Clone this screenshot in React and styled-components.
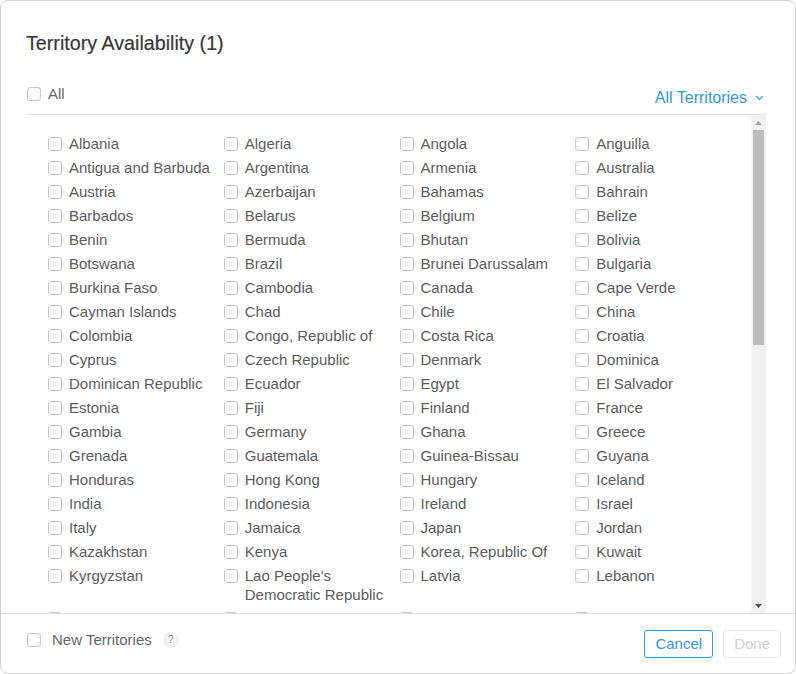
import styled, { createGlobalStyle } from 'styled-components'

const territories = [
  'Albania', 'Algeria', 'Angola', 'Anguilla',
  'Antigua and Barbuda', 'Argentina', 'Armenia', 'Australia',
  'Austria', 'Azerbaijan', 'Bahamas', 'Bahrain',
  'Barbados', 'Belarus', 'Belgium', 'Belize',
  'Benin', 'Bermuda', 'Bhutan', 'Bolivia',
  'Botswana', 'Brazil', 'Brunei Darussalam', 'Bulgaria',
  'Burkina Faso', 'Cambodia', 'Canada', 'Cape Verde',
  'Cayman Islands', 'Chad', 'Chile', 'China',
  'Colombia', 'Congo, Republic of', 'Costa Rica', 'Croatia',
  'Cyprus', 'Czech Republic', 'Denmark', 'Dominica',
  'Dominican Republic', 'Ecuador', 'Egypt', 'El Salvador',
  'Estonia', 'Fiji', 'Finland', 'France',
  'Gambia', 'Germany', 'Ghana', 'Greece',
  'Grenada', 'Guatemala', 'Guinea-Bissau', 'Guyana',
  'Honduras', 'Hong Kong', 'Hungary', 'Iceland',
  'India', 'Indonesia', 'Ireland', 'Israel',
  'Italy', 'Jamaica', 'Japan', 'Jordan',
  'Kazakhstan', 'Kenya', 'Korea, Republic Of', 'Kuwait',
  'Kyrgyzstan', "Lao People's Democratic Republic", 'Latvia', 'Lebanon',
  'Liberia', 'Libya', 'Lithuania', 'Luxembourg',
  'Macau', 'Macedonia', 'Madagascar', 'Malawi',
  'Malaysia', 'Maldives', 'Mali', 'Malta',
  'Mauritania', 'Mauritius', 'Mexico', 'Micronesia',
  'Moldova', 'Mongolia', 'Montserrat', 'Mozambique',
  'Namibia', 'Nepal', 'Netherlands', 'New Zealand',
  'Nicaragua', 'Niger', 'Nigeria', 'Norway',
  'Oman', 'Pakistan', 'Palau', 'Panama',
  'Papua New Guinea', 'Paraguay', 'Peru', 'Philippines',
  'Poland', 'Portugal', 'Qatar', 'Romania',
  'Russia', 'Sao Tome and Principe', 'Saudi Arabia', 'Senegal',
  'Seychelles', 'Sierra Leone', 'Singapore', 'Slovakia',
  'Slovenia', 'Solomon Islands', 'South Africa', 'Spain',
  'Sri Lanka', 'St. Kitts and Nevis', 'St. Lucia', 'Suriname',
  'Swaziland', 'Sweden', 'Switzerland', 'Taiwan',
  'Tajikistan', 'Tanzania', 'Thailand', 'Trinidad and Tobago',
  'Tunisia', 'Turkey', 'Turkmenistan', 'Uganda',
  'Ukraine', 'United Arab Emirates', 'United Kingdom', 'United States',
  'Uruguay', 'Uzbekistan', 'Venezuela', 'Vietnam',
  'Yemen', 'Zimbabwe',
]

function Checkbox() {
  return <StBox />
}

function Scrollbar() {
  return (
    <StScrollbar>
      <StArrow>
        <svg width="7" height="4" viewBox="0 0 7 4">
          <path d="M0 4 L3.5 0 L7 4 Z" fill="#a3a3a3" />
        </svg>
      </StArrow>
      <StTrack>
        <StThumb />
      </StTrack>
      <StArrow>
        <svg width="7" height="4" viewBox="0 0 7 4">
          <path d="M0 0 L7 0 L3.5 4 Z" fill="#505050" />
        </svg>
      </StArrow>
    </StScrollbar>
  )
}

function App() {
  return (
    <>
      <GlobalStyle />
      <StModal>
        <StTitle>Territory Availability (1)</StTitle>

        <StToolbar>
          <StAll>
            <Checkbox />
            All
          </StAll>
          <StFilter>
            All Territories
            <svg width="9" height="6" viewBox="0 0 9 6">
              <path d="M1 1 L4.5 4.5 L8 1" fill="none" stroke="currentColor" strokeWidth="1.2" />
            </svg>
          </StFilter>
        </StToolbar>

        <StScrollArea>
          <StList>
            {territories.map((name) => (
              <StItem key={name}>
                <Checkbox />
                <span>{name}</span>
              </StItem>
            ))}
          </StList>
          <Scrollbar />
        </StScrollArea>

        <StFooter>
          <StNew>
            <Checkbox />
            New Territories
            <StHelp>?</StHelp>
          </StNew>
          <StButtons>
            <StButton $primary>Cancel</StButton>
            <StButton disabled>Done</StButton>
          </StButtons>
        </StFooter>
      </StModal>
    </>
  )
}

const GlobalStyle = createGlobalStyle`
  html, body {
    margin: 0;
    background: #fff;
  }
  body {
    font-family: "Liberation Sans", Arial, sans-serif;
  }
`

const StModal = styled.div`
  display: flex;
  flex-direction: column;
  box-sizing: border-box;
  width: 796px;
  height: 674px;
  background: #fff;
  border: 1px solid #d2d2d2;
  border-radius: 8px;
  overflow: hidden;
`

const StTitle = styled.h1`
  margin: 31px 26px 0 25px;
  font-size: 19.7px;
  line-height: 22px;
  font-weight: normal;
  color: #383838;
  -webkit-text-stroke: 0.2px #383838;
`

const StToolbar = styled.div`
  display: flex;
  justify-content: space-between;
  align-items: flex-end;
  height: 24px;
  margin: 29px 29px 0 26px;
  padding-bottom: 7px;
  border-bottom: 1px solid #e2e2e2;
`

const StAll = styled.label`
  display: flex;
  align-items: center;
  gap: 7px;
  align-self: flex-start;
  margin-top: 1px;
  font-size: 15px;
  line-height: 19px;
  color: #666;
`

const StFilter = styled.button`
  display: flex;
  align-items: center;
  gap: 8px;
  padding: 0 2px 0 0;
  border: none;
  background: none;
  font-family: inherit;
  font-size: 16px;
  line-height: 19px;
  color: #3398d8;
`

const StScrollArea = styled.div`
  display: flex;
  flex: 1;
  min-height: 0;
  margin: 0 29px 0 26px;
`

const StList = styled.ul`
  flex: 1;
  display: grid;
  grid-template-columns: repeat(4, 1fr);
  align-content: start;
  row-gap: 5px;
  margin: 0;
  padding: 19px 0 0 21px;
  overflow: hidden;
  list-style: none;
`

const StItem = styled.li`
  display: flex;
  align-items: flex-start;
  gap: 7px;
  padding-right: 8px;
  font-size: 15px;
  line-height: 19px;
  color: #5c5c5c;

  & > div {
    margin-top: 3px;
  }
`

const StScrollbar = styled.div`
  display: flex;
  flex-direction: column;
  flex: none;
  width: 15px;
  background: #f1f1f1;
`

const StArrow = styled.div`
  display: flex;
  align-items: center;
  justify-content: center;
  height: 15px;
`

const StTrack = styled.div`
  flex: 1;
`

const StThumb = styled.div`
  height: 215px;
  margin: 0 2px;
  background: #bdbdbd;
`

const StBox = styled.div`
  flex: none;
  box-sizing: border-box;
  width: 14px;
  height: 14px;
  border: 1px solid #c9c9c9;
  border-radius: 3px;
  background: #fbfbfb;
`

const StFooter = styled.footer`
  display: flex;
  justify-content: space-between;
  align-items: center;
  height: 59px;
  padding: 0 14px 0 26px;
  border-top: 1px solid #dedede;
`

const StNew = styled.label`
  display: flex;
  align-items: center;
  gap: 11px;
  margin-bottom: 8px;
  font-size: 15px;
  line-height: 19px;
  color: #666;
`

const StHelp = styled.span`
  display: inline-flex;
  align-items: center;
  justify-content: center;
  width: 16px;
  height: 16px;
  border-radius: 50%;
  background: #f2f2f2;
  font-size: 10px;
  color: #999;
`

const StButtons = styled.div`
  display: flex;
  gap: 10px;
`

const StButton = styled.button`
  box-sizing: border-box;
  height: 28px;
  padding: 0 10px;
  border-radius: 3px;
  border: 1px solid ${(p) => (p.$primary ? '#3a9ad9' : '#e6e6e6')};
  background: #fff;
  font-family: inherit;
  font-size: 15px;
  color: ${(p) => (p.$primary ? '#3398d8' : '#cfcfcf')};
`

export default App
